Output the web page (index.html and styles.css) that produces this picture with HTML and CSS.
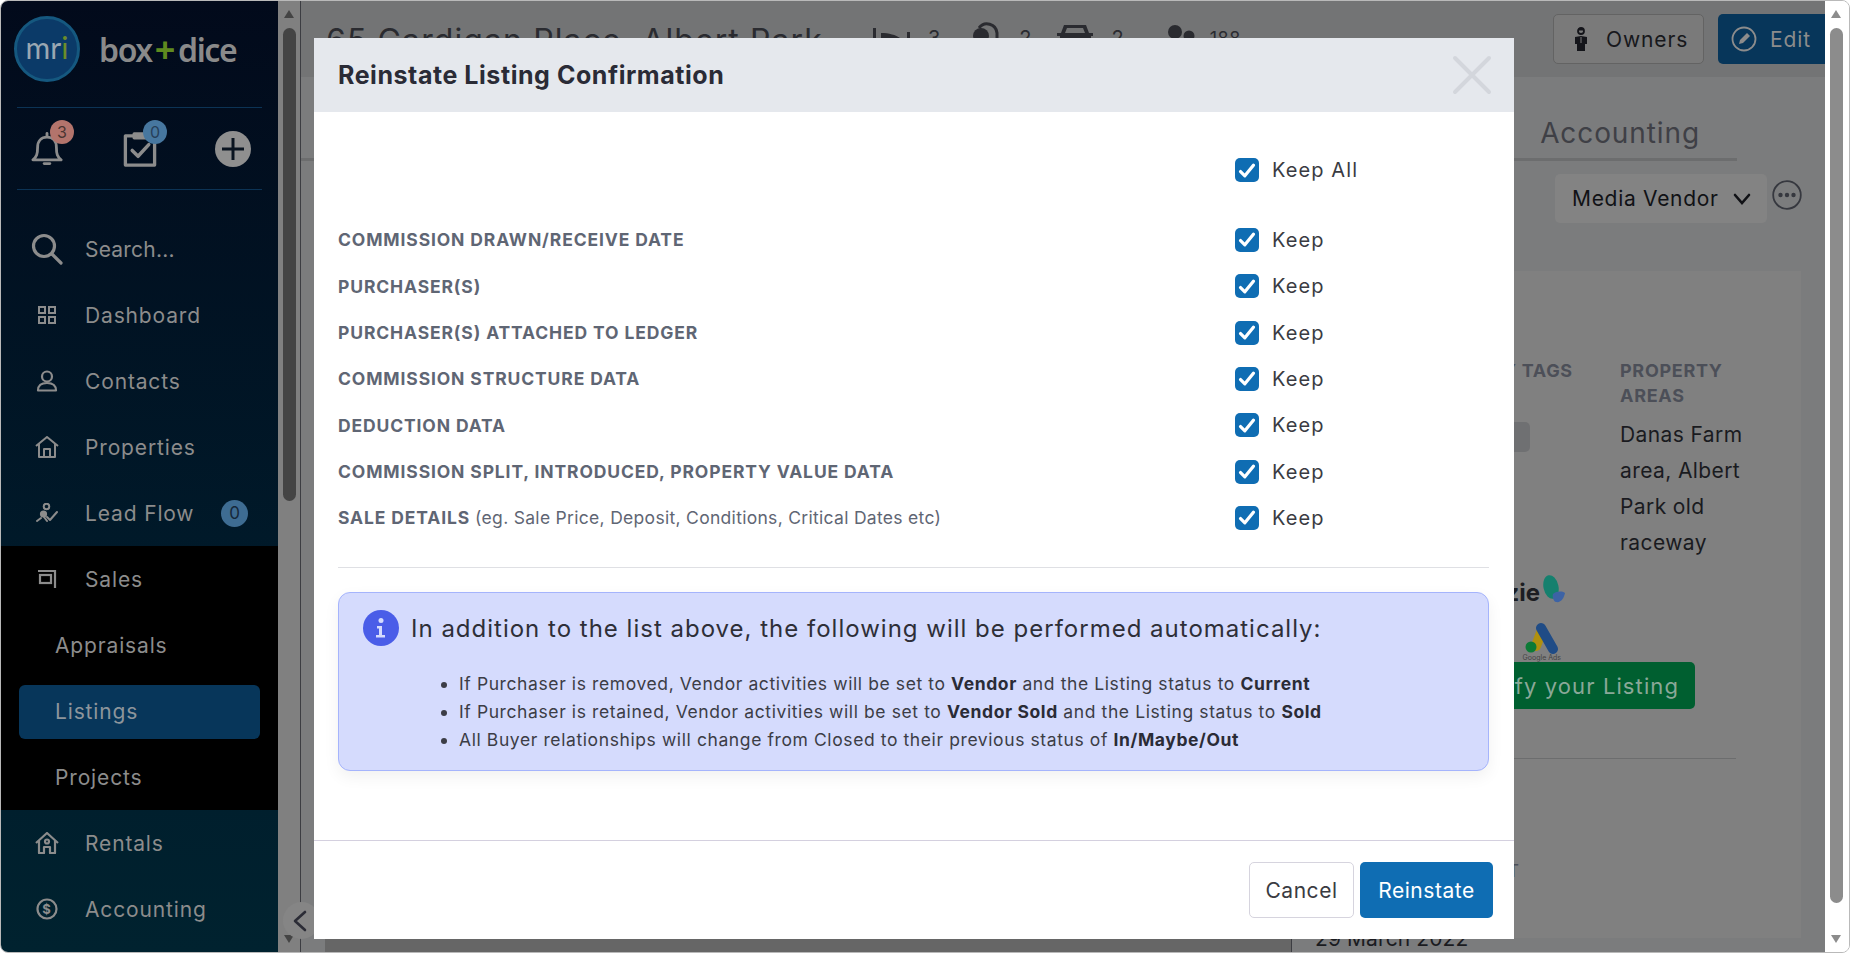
FILE: index.html
```html
<!DOCTYPE html>
<html lang="en">
<head>
    <meta charset="UTF-8">
    <meta name="viewport" content="width=device-width, initial-scale=1.0">
    <title>Reinstate Listing Confirmation</title>
    <link rel="stylesheet" href="styles.css">
</head>
<body>
<div class="window">
    <aside class="sidebar">
        <div class="brand">
            <div class="mri-logo">m<span class="mri-r">r</span><span class="mri-i">i</span></div>
            <div class="brand-name">box<span class="brand-plus">+</span>dice</div>
        </div>
        <div class="quick-icons">
            <div class="quick-icon">
                <svg width="32" height="37" viewBox="0 0 34 38" fill="none" stroke="#8c8c8c" stroke-width="3" stroke-linecap="round" stroke-linejoin="round"><path d="M17 3v3"/><path d="M2 31c4-3 5-6 5-13 0-7 4-11 10-11s10 4 10 11c0 7 1 10 5 13z"/><path d="M14 35h6"/></svg>
                <span class="badge badge-red">3</span>
            </div>
            <div class="quick-icon">
                <svg width="34" height="37" viewBox="0 0 34 38" fill="none" stroke="#8c8c8c" stroke-width="3.4" stroke-linejoin="round"><path d="M11 6H2v30h30V6h-9"/><path d="M11 8V4h12v4z" fill="#8c8c8c"/><path d="M9 21l6 6 11-12" stroke-linecap="round" stroke-width="3.6"/></svg>
                <span class="badge badge-blue">0</span>
            </div>
            <div class="quick-icon">
                <svg width="36" height="36" viewBox="0 0 36 36"><circle cx="18" cy="18" r="18" fill="#8f8f8f"/><path d="M18 7v22M7 18h22" stroke="#0a1420" stroke-width="3"/></svg>
            </div>
        </div>
        <nav class="nav">
            <a class="nav-item search-item">
                <span class="nav-icon"><svg width="32" height="32" viewBox="0 0 32 32" fill="none" stroke="#8c8c8c" stroke-width="3.2" stroke-linecap="round"><circle cx="13" cy="13" r="10.5"/><path d="M21 21l9 9"/></svg></span>
                Search...
            </a>
            <a class="nav-item">
                <span class="nav-icon"><svg width="20" height="20" viewBox="0 0 20 20" fill="none" stroke="#8c8c8c" stroke-width="2"><rect x="2" y="2" width="6" height="6"/><rect x="12" y="2" width="6" height="6"/><rect x="2" y="12" width="6" height="6"/><rect x="12" y="12" width="6" height="6"/></svg></span>
                Dashboard
            </a>
            <a class="nav-item">
                <span class="nav-icon"><svg width="22" height="22" viewBox="0 0 22 22" fill="none" stroke="#8c8c8c" stroke-width="2.2" stroke-linejoin="round"><circle cx="11" cy="6.5" r="5"/><path d="M2 20.5c0-5 3-7.500 9-7.500s9 2.500 9 7.500z"/></svg></span>
                Contacts
            </a>
            <a class="nav-item">
                <span class="nav-icon"><svg width="24" height="22" viewBox="0 0 24 22" fill="none" stroke="#8c8c8c" stroke-width="2" stroke-linejoin="round"><path d="M1 10L12 1l11 9"/><path d="M4 8v13h16V8"/><path d="M9 21v-8h6v8"/></svg></span>
                Properties
            </a>
            <a class="nav-item">
                <span class="nav-icon"><svg width="22" height="20" viewBox="0 0 22 20" fill="none" stroke="#8c8c8c" stroke-width="2" stroke-linecap="round" stroke-linejoin="round"><circle cx="10.500" cy="3.500" r="2.800"/><circle cx="7.500" cy="11" r="3.600" fill="#8c8c8c" stroke="none"/><path d="M1 18l4-3M8 14l3 4"/><path d="M11 14l3 3 7-8"/></svg></span>
                Lead Flow
                <span class="nav-count">0</span>
            </a>
            <div class="nav-group">
                <a class="nav-item">
                    <span class="nav-icon"><svg width="20" height="20" viewBox="0 0 20 20" fill="none" stroke="#8c8c8c" stroke-width="2.200"><path d="M1 2h17v17"/><rect x="3" y="6" width="11" height="8"/></svg></span>
                    Sales
                </a>
                <a class="nav-sub">Appraisals</a>
                <a class="nav-sub active">Listings</a>
                <a class="nav-sub">Projects</a>
            </div>
            <a class="nav-item">
                <span class="nav-icon"><svg width="24" height="22" viewBox="0 0 24 22" fill="none" stroke="#8c8c8c" stroke-width="2.200" stroke-linejoin="round"><path d="M1 11L12 1l11 10"/><path d="M4 9v12h5v-6h6v6h5V9"/><circle cx="12" cy="9.500" r="2"/></svg></span>
                Rentals
            </a>
            <a class="nav-item">
                <span class="nav-icon"><svg width="22" height="22" viewBox="0 0 22 22"><circle cx="11" cy="11" r="9.500" fill="none" stroke="#8c8c8c" stroke-width="2.200"/><text x="11" y="16" text-anchor="middle" class="dollar">$</text></svg></span>
                Accounting
            </a>
        </nav>
    </aside>

    <div class="inner-scroll">
        <span class="arrow-up dark"></span>
        <span class="thumb"></span>
        <span class="arrow-down dark"></span>
    </div>

    <main class="main">
        <header class="topbar">
            <h1 class="address">65 Cardigan Place, Albert Park</h1>
            <div class="stats">
                <svg class="stat-bed" width="37" height="20" viewBox="0 0 37 20" fill="#2a2b30"><path d="M0 0h3v20H0zM8 5c8 0 15 2 19 5v6H8zM34 4h3v16h-3z"/></svg>
                <span class="stat-num">3</span>
                <svg class="stat-bath" width="26" height="32" viewBox="0 0 26 32" fill="none" stroke="#2a2b30" stroke-width="3"><path d="M24 32V12a10 10 0 0 0-18-5"/><circle cx="8" cy="15" r="8" fill="#2a2b30" stroke="none"/></svg>
                <span class="stat-num num-bath">2</span>
                <svg class="stat-car" width="36" height="24" viewBox="0 0 36 24" fill="#2a2b30"><path d="M7 1h22l3 8h4v3h-2v12h-7v-4H12v4H3V12H0V9h4zM10 4L8 9h20l-2-5z"/></svg>
                <span class="stat-num">2</span>
                <svg class="stat-people" width="28" height="24" viewBox="0 0 28 24" fill="#2a2b30"><circle cx="8" cy="7" r="7"/><circle cx="22" cy="11" r="5.500"/><path d="M0 24c0-6 3-9 8-9s9 3 9 9zM18 24c1-3 2-6 4-6s5 2 6 6z"/></svg>
                <span class="stat-num small">188</span>
            </div>
            <div class="top-actions">
                <button class="owners-btn">
                    <svg width="14" height="24" viewBox="0 0 14 24" fill="#14151a"><circle cx="7" cy="4" r="3" fill="none" stroke="#14151a" stroke-width="1.800"/><path d="M4 1.500h6v2H4z"/><path d="M1 10l6-1 6 1v7h-2v7H3v-7H1z"/><path d="M7 10v6" stroke="#7a7a7a"/></svg>
                    Owners
                </button>
                <button class="edit-btn">
                    <svg width="26" height="26" viewBox="0 0 26 26" fill="none" stroke="#8c8c8c" stroke-width="1.800"><circle cx="13" cy="13" r="11.500"/><path d="M8 18l1-4 7-7 3 3-7 7z" fill="#8c8c8c" stroke="none"/></svg>
                    Edit
                </button>
            </div>
        </header>

        <div class="tabs">
            <span class="tab">Accounting</span>
        </div>

        <div class="filter-row">
            <div class="select-box">
                Media Vendor
                <svg width="18" height="12" viewBox="0 0 18 12" fill="none" stroke="#111216" stroke-width="2.600" stroke-linecap="round"><path d="M2 2l7 8 7-8"/></svg>
            </div>
            <svg width="30" height="30" viewBox="0 0 30 30"><circle cx="15" cy="15" r="13.800" fill="none" stroke="#36383f" stroke-width="1.800"/><circle cx="8.500" cy="15" r="2.200" fill="#36383f"/><circle cx="15" cy="15" r="2.200" fill="#36383f"/><circle cx="21.500" cy="15" r="2.200" fill="#36383f"/></svg>
        </div>

        <section class="panel">
            <div class="prop-cols">
                <div class="col-tags">
                    <div class="col-title">PROPERTY TAGS</div>
                    <span class="tag-chip"></span>
                </div>
                <div class="col-areas">
                    <div class="col-title">PROPERTY AREAS</div>
                    <p>Danas Farm area, Albert Park old raceway</p>
                </div>
            </div>
            <div class="promo">
                <div class="logo-zie">
                    <span class="zie-text">zie</span>
                    <svg width="26" height="30" viewBox="0 0 26 30"><ellipse cx="11" cy="12" rx="7.500" ry="12" fill="#15806e" transform="rotate(-12 11 12)"/><path d="M13 19c4-3 9-3 12-1-1 5-4 10-9 9-2 0-4-5-3-8z" fill="#3d63a5"/></svg>
                </div>
                <div class="logo-ads">
                    <svg width="34" height="32" viewBox="0 0 34 32" fill="none" stroke-width="10" stroke-linecap="round"><path d="M11 24L17 8" stroke="#b0900e"/><path d="M16 6l12 21" stroke="#204c86"/><circle cx="6" cy="25" r="5.500" fill="#0c7a36"/></svg>
                    <span class="ads-name">Google Ads</span>
                </div>
                <button class="promo-btn">Simplify your Listing</button>
            </div>
            <div class="panel-rule"></div>
            <div class="date-label">T</div>
        </section>

        <div class="bottom-strip">
            <div class="strip-dark"></div>
            <div class="strip-date">29 March 2022</div>
        </div>

        <button class="collapse-btn" aria-label="Collapse">
            <svg width="14" height="22" viewBox="0 0 14 22" fill="none" stroke="#2b2c36" stroke-width="2.600" stroke-linecap="round" stroke-linejoin="round"><path d="M12 2L2 11l10 9"/></svg>
        </button>
    </main>

    <div class="page-scroll">
        <span class="arrow-up"></span>
        <span class="thumb"></span>
        <span class="arrow-down"></span>
    </div>

    <div class="modal">
        <div class="modal-header">
            <h2>Reinstate Listing Confirmation</h2>
            <svg width="40" height="40" viewBox="0 0 40 40" stroke="#d3d6dc" stroke-width="4" stroke-linecap="round"><path d="M3 3l34 34M37 3L3 37"/></svg>
        </div>
        <div class="modal-body">
            <div class="keep-row keep-all">
                <span></span>
                <label class="keep"><span class="check"><svg width="18" height="15" viewBox="0 0 16 14" fill="none" stroke="#fff" stroke-width="3" stroke-linecap="round" stroke-linejoin="round"><path d="M2 8l4 4 8-10"/></svg></span>Keep All</label>
            </div>
            <div class="keep-row">
                <span class="row-label">COMMISSION DRAWN/RECEIVE DATE</span>
                <label class="keep"><span class="check"><svg width="18" height="15" viewBox="0 0 16 14" fill="none" stroke="#fff" stroke-width="3" stroke-linecap="round" stroke-linejoin="round"><path d="M2 8l4 4 8-10"/></svg></span>Keep</label>
            </div>
            <div class="keep-row">
                <span class="row-label">PURCHASER(S)</span>
                <label class="keep"><span class="check"><svg width="18" height="15" viewBox="0 0 16 14" fill="none" stroke="#fff" stroke-width="3" stroke-linecap="round" stroke-linejoin="round"><path d="M2 8l4 4 8-10"/></svg></span>Keep</label>
            </div>
            <div class="keep-row">
                <span class="row-label">PURCHASER(S) ATTACHED TO LEDGER</span>
                <label class="keep"><span class="check"><svg width="18" height="15" viewBox="0 0 16 14" fill="none" stroke="#fff" stroke-width="3" stroke-linecap="round" stroke-linejoin="round"><path d="M2 8l4 4 8-10"/></svg></span>Keep</label>
            </div>
            <div class="keep-row">
                <span class="row-label">COMMISSION STRUCTURE DATA</span>
                <label class="keep"><span class="check"><svg width="18" height="15" viewBox="0 0 16 14" fill="none" stroke="#fff" stroke-width="3" stroke-linecap="round" stroke-linejoin="round"><path d="M2 8l4 4 8-10"/></svg></span>Keep</label>
            </div>
            <div class="keep-row">
                <span class="row-label">DEDUCTION DATA</span>
                <label class="keep"><span class="check"><svg width="18" height="15" viewBox="0 0 16 14" fill="none" stroke="#fff" stroke-width="3" stroke-linecap="round" stroke-linejoin="round"><path d="M2 8l4 4 8-10"/></svg></span>Keep</label>
            </div>
            <div class="keep-row">
                <span class="row-label">COMMISSION SPLIT, INTRODUCED, PROPERTY VALUE DATA</span>
                <label class="keep"><span class="check"><svg width="18" height="15" viewBox="0 0 16 14" fill="none" stroke="#fff" stroke-width="3" stroke-linecap="round" stroke-linejoin="round"><path d="M2 8l4 4 8-10"/></svg></span>Keep</label>
            </div>
            <div class="keep-row">
                <span class="row-label">SALE DETAILS <span class="row-note">(eg. Sale Price, Deposit, Conditions, Critical Dates etc)</span></span>
                <label class="keep"><span class="check"><svg width="18" height="15" viewBox="0 0 16 14" fill="none" stroke="#fff" stroke-width="3" stroke-linecap="round" stroke-linejoin="round"><path d="M2 8l4 4 8-10"/></svg></span>Keep</label>
            </div>
            <hr class="divider">
            <div class="notice">
                <div class="notice-title">
                    <svg width="36" height="36" viewBox="0 0 36 36"><circle cx="18" cy="18" r="18" fill="#4a5de8"/><circle cx="18" cy="10.500" r="2.500" fill="#d5dbfd"/><path d="M14 16h5v9h3v2.500h-9V25h3v-6.500h-2z" fill="#d5dbfd"/></svg>
                    In addition to the list above, the following will be performed automatically:
                </div>
                <ul>
                    <li>If Purchaser is removed, Vendor activities will be set to <b>Vendor</b> and the Listing status to <b>Current</b></li>
                    <li>If Purchaser is retained, Vendor activities will be set to <b>Vendor Sold</b> and the Listing status to <b>Sold</b></li>
                    <li>All Buyer relationships will change from Closed to their previous status of <b>In/Maybe/Out</b></li>
                </ul>
            </div>
        </div>
        <div class="modal-footer">
            <button class="btn-cancel">Cancel</button>
            <button class="btn-reinstate">Reinstate</button>
        </div>
    </div>
</div>
</body>
</html>
```

FILE: styles.css
```css
* {
    box-sizing: border-box;
}

html, body {
    margin: 0;
    padding: 0;
    height: 100%;
    overflow: hidden;
    background: #fff;
}

body {
    font-family: Inter, "Liberation Sans", sans-serif;
}

button {
    font-family: inherit;
    cursor: pointer;
}

.window {
    position: relative;
    display: flex;
    width: 1850px;
    height: 953px;
    border: 1px solid #b9b9b9;
    border-radius: 8px;
    overflow: hidden;
}

/* sidebar */
.sidebar {
    width: 277px;
    flex-shrink: 0;
    background: linear-gradient(180deg, #020a1b 0%, #001a2a 60%, #00222f 100%);
    color: #8c8c8c;
}

.brand {
    display: flex;
    align-items: center;
    height: 107px;
    margin: 0 16px;
    padding: 0 0 10px 0;
    gap: 19px;
    border-bottom: 1px solid #0c3355;
}

.mri-logo {
    width: 66px;
    height: 66px;
    border-radius: 50%;
    flex-shrink: 0;
    margin-left: -3px;
    background: #0b3a68;
    border: 3px solid #15587f;
    color: #9aa7b2;
    font-family: Lato, sans-serif;
    font-size: 30px;
    line-height: 56px;
    text-align: center;
}

.mri-r {
    color: #9aa7b2;
}

.mri-i {
    color: #6c8c2a;
}

.brand-name {
    display: flex;
    align-items: center;
    font-family: "Noto Sans", sans-serif;
    font-weight: 600;
    font-size: 32px;
    letter-spacing: -1.4px;
    color: #8a8a8a;
}

.brand-plus {
    color: #5f8a1f;
    font-size: 36px;
    font-weight: 700;
    margin: 0 4px 0 3px;
}

.quick-icons {
    display: flex;
    justify-content: space-between;
    align-items: center;
    height: 82px;
    margin: 0 16px;
    padding: 0 11px 0 12px;
    border-bottom: 1px solid #0c3355;
}

.quick-icon {
    position: relative;
    width: 36px;
    height: 38px;
    display: flex;
    align-items: center;
    justify-content: center;
}

.badge {
    position: absolute;
    top: -10px;
    left: 21px;
    width: 24px;
    height: 24px;
    border-radius: 50%;
    font-size: 16px;
    line-height: 24px;
    text-align: center;
    color: #4a3431;
}

.badge-red {
    background: #b3746c;
}

.badge-blue {
    background: #47779f;
    color: #26405a;
}

.nav {
    padding-top: 26px;
}

.nav-item {
    display: flex;
    align-items: center;
    height: 66px;
    padding-left: 30px;
    font-size: 21px;
    letter-spacing: 0.85px;
    color: #8c8c8c;
}

.nav-icon {
    width: 32px;
    margin-right: 22px;
    display: flex;
    justify-content: center;
}

.search-item {
    letter-spacing: 0.2px;
}

.nav-count {
    width: 27px;
    height: 27px;
    margin-left: auto;
    margin-right: 30px;
    border-radius: 50%;
    background: #3e6c92;
    color: #16283a;
    font-size: 17px;
    line-height: 27px;
    text-align: center;
    letter-spacing: 0;
}

.nav-group {
    display: flex;
    flex-direction: column;
    gap: 12px;
    padding-bottom: 5px;
    background: #000;
}

.nav-group .nav-item {
    margin-bottom: -5px;
}

.nav-sub {
    display: block;
    height: 54px;
    margin: 0 18px;
    padding-left: 36px;
    border-radius: 6px;
    font-size: 21px;
    line-height: 54px;
    letter-spacing: 0.85px;
    color: #8c8c8c;
}

.nav-sub.active {
    background: #07365a;
    color: #8d959c;
}

.nav .dollar {
    font-size: 13px;
    font-weight: 700;
    fill: #8c8c8c;
}

/* the two scroll tracks */
.inner-scroll,
.page-scroll {
    position: relative;
    flex-shrink: 0;
}

.inner-scroll {
    width: 23px;
    background: #808080;
    border-right: 1px solid #3c3d42;
}

.page-scroll {
    width: 24px;
    background: #fff;
}

.inner-scroll .thumb,
.page-scroll .thumb {
    position: absolute;
    border-radius: 7px;
}

.inner-scroll .thumb {
    top: 27px;
    left: 5px;
    width: 13px;
    height: 473px;
    background: #444;
}

.page-scroll .thumb {
    top: 27px;
    left: 5px;
    width: 13px;
    height: 875px;
    background: #8c8c8c;
}

.arrow-up,
.arrow-down {
    position: absolute;
    left: 6px;
    width: 0;
    height: 0;
    border-left: 5.5px solid transparent;
    border-right: 5.5px solid transparent;
}

.arrow-up {
    top: 9px;
    border-bottom: 8px solid #8c8c8c;
}

.arrow-down {
    bottom: 9px;
    border-top: 8px solid #8c8c8c;
}

.arrow-up.dark {
    border-bottom-color: #444;
}

.arrow-down.dark {
    border-top-color: #444;
}

/* page behind the dialog */
.main {
    position: relative;
    flex: 1;
    min-width: 0;
    display: flex;
    flex-direction: column;
    background: #7b7c7d;
    color: #1a1b1f;
}

.topbar {
    display: flex;
    align-items: flex-start;
    height: 76px;
    padding: 13px 0 0 25px;
    background: #737475;
}

.address {
    margin: 7px 50px 0 0;
    font-size: 32px;
    font-weight: 400;
    letter-spacing: 1.1px;
    white-space: nowrap;
    color: #2a2b30;
}

.stats {
    display: flex;
    align-items: flex-start;
    color: #2a2b30;
}

.stat-bed {
    margin-top: 14px;
}

.stat-bath {
    margin: 7px 0 0 33px;
}

.stat-car {
    margin: 10px 0 0 26px;
}

.stat-people {
    margin: 11px 0 0 43px;
}

.stat-num {
    margin: 12px 0 0 18px;
    font-size: 20px;
    line-height: 24px;
}

.stat-num.num-bath {
    margin-left: 20px;
}

.stat-num.small {
    margin: 13px 0 0 15px;
    font-size: 18px;
    letter-spacing: 0.6px;
}

.top-actions {
    display: flex;
    gap: 14px;
    margin-left: auto;
}

.owners-btn,
.edit-btn {
    display: flex;
    align-items: center;
    height: 50px;
    border-radius: 5px;
    font-size: 21px;
    letter-spacing: 0.9px;
}

.owners-btn {
    width: 151px;
    padding: 0 0 0 20px;
    gap: 18px;
    background: #7a7a7a;
    border: 1px solid #636363;
    color: #17181c;
}

.edit-btn {
    width: 107px;
    padding: 0 0 0 13px;
    gap: 13px;
    background: #07365a;
    border: none;
    border-radius: 5px 0 0 5px;
    color: #8c8c8c;
}

.tabs {
    display: flex;
    justify-content: flex-end;
    height: 84px;
    margin-right: 88px;
    border-bottom: 3px solid #6c6d6e;
}

.tab {
    margin: 39px 37px 0 0;
    font-size: 28px;
    letter-spacing: 0.9px;
    color: #3f4046;
}

.filter-row {
    display: flex;
    justify-content: flex-end;
    align-items: flex-start;
    height: 110px;
    gap: 5px;
    padding: 13px 23px 0 0;
}

.select-box {
    display: flex;
    align-items: center;
    justify-content: space-between;
    width: 212px;
    height: 49px;
    padding: 0 16px 0 17px;
    border-radius: 5px;
    background: #838383;
    font-size: 21px;
    letter-spacing: 0.7px;
    color: #111216;
}

.filter-row > svg {
    margin-top: 6px;
}

.panel {
    flex: 1;
    margin: 0 24px 0 25px;
    background: #808080;
    display: flex;
    flex-direction: column;
    min-height: 0;
}

.prop-cols {
    display: flex;
    justify-content: flex-end;
    padding-top: 87px;
}

.col-tags {
    width: 216px;
}

.col-areas {
    width: 181px;
    padding-right: 16px;
}

.col-title {
    font-size: 18px;
    font-weight: 700;
    line-height: 25px;
    letter-spacing: 0.7px;
    color: #4c4f58;
}

.col-tags .col-title {
    margin-left: 10px;
    white-space: nowrap;
}

.tag-chip {
    display: block;
    width: 126px;
    height: 30px;
    margin-top: 39px;
    border-radius: 5px;
    background: #6f7072;
}

.col-areas p {
    margin: 9px 0 0;
    font-size: 21px;
    line-height: 36px;
    letter-spacing: 0.4px;
    color: #1a1b1f;
}

.promo {
    display: flex;
    flex-direction: column;
    align-items: flex-end;
    margin: 14px 106px 0 0;
}

.logo-zie {
    display: flex;
    align-items: flex-end;
    height: 30px;
    margin-right: 129px;
}

.zie-text {
    font-size: 24px;
    font-weight: 700;
    line-height: 24px;
    color: #1c1d22;
}

.logo-ads {
    display: flex;
    flex-direction: column;
    align-items: center;
    height: 40px;
    margin: 17px 134px 0 0;
}

.ads-name {
    font-size: 7px;
    line-height: 8px;
    color: #444;
}

.promo-btn {
    width: 300px;
    height: 47px;
    padding: 0 16px 0 0;
    border: none;
    border-radius: 5px;
    background: #005f30;
    color: #8aa898;
    font-size: 22px;
    letter-spacing: 1.1px;
    text-align: right;
    white-space: nowrap;
}

.panel-rule {
    height: 1px;
    margin: 49px 65px 0 0;
    background: #6c6d6e;
}

.date-label {
    margin: 104px 282px 0 0;
    font-size: 17px;
    line-height: 16px;
    text-align: right;
    color: #4c4f58;
}

.bottom-strip {
    display: flex;
    flex-shrink: 0;
    height: 14px;
    margin-left: 24px;
}

.strip-dark {
    width: 967px;
    background: #666;
    border-right: 1px solid #3c3d42;
}

.strip-date {
    margin-left: 23px;
    font-size: 21px;
    line-height: 20px;
    margin-top: -9px;
    letter-spacing: 0.1px;
    color: #1a1b1f;
}

.collapse-btn {
    position: absolute;
    left: -18px;
    bottom: 13px;
    width: 37px;
    height: 37px;
    padding: 0 3px 0 0;
    border: none;
    border-radius: 50%;
    background: #858585;
    display: flex;
    align-items: center;
    justify-content: center;
}

/* dialog */
.modal {
    position: absolute;
    top: 37px;
    left: 313px;
    width: 1200px;
    height: 901px;
    display: flex;
    flex-direction: column;
    background: #fff;
    color: #2e2f38;
}

.modal-header {
    display: flex;
    align-items: center;
    justify-content: space-between;
    flex-shrink: 0;
    height: 74px;
    padding: 0 22px 0 24px;
    background: #e5e8ed;
}

.modal-header h2 {
    margin: 0;
    font-size: 25px;
    font-weight: 700;
    letter-spacing: 0.55px;
    color: #2a2b36;
}

.modal-body {
    flex: 1;
    padding: 35px 25px 0 24px;
}

.keep-row {
    display: grid;
    grid-template-columns: 897px 1fr;
    align-items: center;
    height: 46.33px;
}

.keep-all {
    margin-bottom: 23.400px;
}

.row-label {
    font-size: 17.500px;
    font-weight: 700;
    letter-spacing: 0.87px;
    color: #5f6674;
}

.row-note {
    font-weight: 400;
    letter-spacing: 0.3px;
}

.keep {
    display: flex;
    align-items: center;
    gap: 13px;
    font-size: 20px;
    letter-spacing: 1.100px;
    color: #3a3b42;
}

.check {
    display: flex;
    align-items: center;
    justify-content: center;
    width: 24px;
    height: 24px;
    border-radius: 5px;
    background: #0f6db3;
}

.divider {
    height: 1px;
    margin: 26px 0 0;
    border: none;
    background: #dfe0e4;
}

.notice {
    height: 179px;
    margin-top: 24px;
    padding: 17px 24px 0 24px;
    border: 1px solid #a5b4fc;
    border-radius: 12px;
    background: #d5dbfd;
    box-shadow: 0 6px 16px rgba(0, 0, 0, 0.06);
}

.notice-title {
    display: flex;
    align-items: center;
    gap: 12px;
    font-size: 24px;
    letter-spacing: 1px;
    color: #2e2f38;
    white-space: nowrap;
}

.notice ul {
    margin: 24px 0 0;
    padding-left: 96px;
    font-size: 17.500px;
    line-height: 28px;
    letter-spacing: 0.6px;
    color: #3c3d46;
}

.notice b {
    color: #2a2b36;
}

.modal-footer {
    display: flex;
    justify-content: flex-end;
    gap: 6px;
    flex-shrink: 0;
    height: 99px;
    padding: 21px 21px 0 0;
    border-top: 1px solid #d4d0df;
}

.btn-cancel,
.btn-reinstate {
    height: 56px;
    padding: 0;
    border-radius: 5px;
    font-size: 21px;
    letter-spacing: 0.55px;
}

.btn-cancel {
    width: 105px;
    background: #fff;
    border: 1px solid #d6d4de;
    color: #3a3b42;
}

.btn-reinstate {
    width: 133px;
    background: #0f6db3;
    border: none;
    color: #fff;
}
```
